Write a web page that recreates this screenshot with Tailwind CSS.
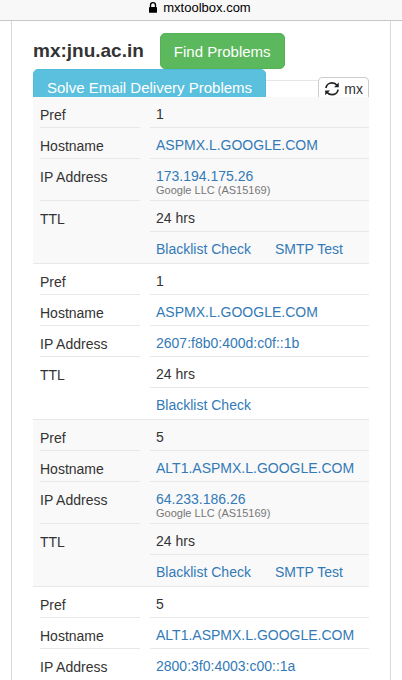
<!DOCTYPE html>
<html lang="en">
<head>
    <meta charset="UTF-8">
    <meta name="viewport" content="width=device-width, initial-scale=1.0">
    <title>mx:jnu.ac.in - mxtoolbox.com</title>
    <script src="https://cdn.jsdelivr.net/npm/@tailwindcss/browser@4"></script>
</head>
<body class="bg-white font-['Liberation_Sans',Arial,sans-serif] text-[15px] leading-5 text-[#333333]">
    <!-- Browser address bar -->
    <header class="flex h-[21px] items-start justify-center gap-1 border-b border-[#c6c6c6] bg-[#f8f8f8] pr-1 text-[13px] leading-4 text-black">
        <svg class="mt-0.5 h-3 w-3" viewBox="0 0 12 12" aria-hidden="true">
            <path d="M3.5 6V3.2a2.5 2.5 0 0 1 5 0V6" fill="none" stroke="#000" stroke-width="1.3"/>
            <rect x="2" y="5" width="8" height="5.8" rx="0.9"/>
        </svg>
        <span>mxtoolbox.com</span>
    </header>

    <main class="mx-[11px] min-h-[calc(100vh-21px)] border-x border-[#d8d8d8] px-[21px] pt-3">
        <div class="flex items-center gap-4">
            <h1 class="text-[19px] font-bold whitespace-nowrap">mx:jnu.ac.in</h1>
            <button type="button" class="h-9 rounded-[5px] border border-[#56b256] bg-[#5cb85c] px-[13px] pt-px whitespace-nowrap text-white">Find Problems</button>
        </div>

        <div class="flex h-7 items-start overflow-hidden">
            <button type="button" class="h-9 shrink-0 rounded-[5px] border border-[#50bbdb] bg-[#5bc0de] px-[13px] pt-px whitespace-nowrap text-white">Solve Email Delivery Problems</button>
            <span class="mt-[11px] flex-1 border-t border-[#e5e5e5]"></span>
            <button type="button" class="mt-2 flex h-7 shrink-0 items-start gap-1 rounded-[4px] border border-[#cccccc] bg-white px-[5px] pt-[3px] text-sm leading-4">
                <svg class="h-4 w-4" viewBox="0 0 16 16" aria-hidden="true">
                    <g fill="none" stroke="#222" stroke-width="1.7">
                        <path d="M1.9 7C2.4 4 5 1.9 8 1.9c2 0 3.9.9 5.1 2.5"/>
                        <path d="M14.1 8.6c-.5 3-3.1 5.1-6.1 5.1-2 0-3.9-.9-5.1-2.5"/>
                    </g>
                    <path d="M14.8 1.4v4.8H10zM1.2 14.2V9.4H6z" fill="#222"/>
                </svg>
                <span>mx</span>
            </button>
        </div>

        <table class="w-full table-fixed border-collapse text-left text-sm leading-5">
            <colgroup>
                <col class="w-[117px]">
                <col>
            </colgroup>
            <tbody class="border-b border-[#e8e8e8] bg-[#f9f9f9]">
                <tr>
                    <th scope="row" class="p-0 pr-2.5 pl-[7px] align-top font-normal"><div class="h-[31px] border-b border-[#e8e8e8] pt-2">Pref</div></th>
                    <td class="p-0 align-top"><div class="h-[31px] border-b border-[#e8e8e8] px-1.5 pt-[7px]">1</div></td>
                </tr>
                <tr>
                    <th scope="row" class="p-0 pr-2.5 pl-[7px] align-top font-normal"><div class="h-[31px] border-b border-[#e8e8e8] pt-2">Hostname</div></th>
                    <td class="p-0 align-top"><div class="h-[31px] border-b border-[#e8e8e8] px-1.5 pt-[7px]"><a href="#" class="text-[#337ab7]">ASPMX.L.GOOGLE.COM</a></div></td>
                </tr>
                <tr>
                    <th scope="row" class="p-0 pr-2.5 pl-[7px] align-top font-normal"><div class="h-[42px] border-b border-[#e8e8e8] pt-2">IP Address</div></th>
                    <td class="p-0 align-top"><div class="h-[42px] border-b border-[#e8e8e8] px-1.5 pt-[7px]"><a href="#" class="block text-[#337ab7]">173.194.175.26</a><small class="block text-[11px] leading-2 text-[#777777]">Google LLC (AS15169)</small></div></td>
                </tr>
                <tr>
                    <th scope="row" rowspan="2" class="p-0 pt-2 pl-[7px] align-top font-normal">TTL</th>
                    <td class="p-0 align-top"><div class="h-[31px] border-b border-[#e8e8e8] px-1.5 pt-[7px]">24 hrs</div></td>
                </tr>
                <tr>
                    <td class="p-0 align-top"><div class="flex h-[31px] gap-6 px-1.5 pt-[7px] text-[#337ab7]"><a href="#">Blacklist Check</a><a href="#">SMTP Test</a></div></td>
                </tr>
            </tbody>
            <tbody class="border-b border-[#e8e8e8]">
                <tr>
                    <th scope="row" class="p-0 pr-2.5 pl-[7px] align-top font-normal"><div class="h-[31px] border-b border-[#e8e8e8] pt-2">Pref</div></th>
                    <td class="p-0 align-top"><div class="h-[31px] border-b border-[#e8e8e8] px-1.5 pt-[7px]">1</div></td>
                </tr>
                <tr>
                    <th scope="row" class="p-0 pr-2.5 pl-[7px] align-top font-normal"><div class="h-[31px] border-b border-[#e8e8e8] pt-2">Hostname</div></th>
                    <td class="p-0 align-top"><div class="h-[31px] border-b border-[#e8e8e8] px-1.5 pt-[7px]"><a href="#" class="text-[#337ab7]">ASPMX.L.GOOGLE.COM</a></div></td>
                </tr>
                <tr>
                    <th scope="row" class="p-0 pr-2.5 pl-[7px] align-top font-normal"><div class="h-[31px] border-b border-[#e8e8e8] pt-2">IP Address</div></th>
                    <td class="p-0 align-top"><div class="h-[31px] border-b border-[#e8e8e8] px-1.5 pt-[7px]"><a href="#" class="text-[#337ab7]">2607:f8b0:400d:c0f::1b</a></div></td>
                </tr>
                <tr>
                    <th scope="row" rowspan="2" class="p-0 pt-2 pl-[7px] align-top font-normal">TTL</th>
                    <td class="p-0 align-top"><div class="h-[31px] border-b border-[#e8e8e8] px-1.5 pt-[7px]">24 hrs</div></td>
                </tr>
                <tr>
                    <td class="p-0 align-top"><div class="flex h-[31px] gap-6 px-1.5 pt-[7px] text-[#337ab7]"><a href="#">Blacklist Check</a></div></td>
                </tr>
            </tbody>
            <tbody class="border-b border-[#e8e8e8] bg-[#f9f9f9]">
                <tr>
                    <th scope="row" class="p-0 pr-2.5 pl-[7px] align-top font-normal"><div class="h-[31px] border-b border-[#e8e8e8] pt-2">Pref</div></th>
                    <td class="p-0 align-top"><div class="h-[31px] border-b border-[#e8e8e8] px-1.5 pt-[7px]">5</div></td>
                </tr>
                <tr>
                    <th scope="row" class="p-0 pr-2.5 pl-[7px] align-top font-normal"><div class="h-[31px] border-b border-[#e8e8e8] pt-2">Hostname</div></th>
                    <td class="p-0 align-top"><div class="h-[31px] border-b border-[#e8e8e8] px-1.5 pt-[7px]"><a href="#" class="text-[#337ab7]">ALT1.ASPMX.L.GOOGLE.COM</a></div></td>
                </tr>
                <tr>
                    <th scope="row" class="p-0 pr-2.5 pl-[7px] align-top font-normal"><div class="h-[42px] border-b border-[#e8e8e8] pt-2">IP Address</div></th>
                    <td class="p-0 align-top"><div class="h-[42px] border-b border-[#e8e8e8] px-1.5 pt-[7px]"><a href="#" class="block text-[#337ab7]">64.233.186.26</a><small class="block text-[11px] leading-2 text-[#777777]">Google LLC (AS15169)</small></div></td>
                </tr>
                <tr>
                    <th scope="row" rowspan="2" class="p-0 pt-2 pl-[7px] align-top font-normal">TTL</th>
                    <td class="p-0 align-top"><div class="h-[31px] border-b border-[#e8e8e8] px-1.5 pt-[7px]">24 hrs</div></td>
                </tr>
                <tr>
                    <td class="p-0 align-top"><div class="flex h-[31px] gap-6 px-1.5 pt-[7px] text-[#337ab7]"><a href="#">Blacklist Check</a><a href="#">SMTP Test</a></div></td>
                </tr>
            </tbody>
            <tbody>
                <tr>
                    <th scope="row" class="p-0 pr-2.5 pl-[7px] align-top font-normal"><div class="h-[31px] border-b border-[#e8e8e8] pt-2">Pref</div></th>
                    <td class="p-0 align-top"><div class="h-[31px] border-b border-[#e8e8e8] px-1.5 pt-[7px]">5</div></td>
                </tr>
                <tr>
                    <th scope="row" class="p-0 pr-2.5 pl-[7px] align-top font-normal"><div class="h-[31px] border-b border-[#e8e8e8] pt-2">Hostname</div></th>
                    <td class="p-0 align-top"><div class="h-[31px] border-b border-[#e8e8e8] px-1.5 pt-[7px]"><a href="#" class="text-[#337ab7]">ALT1.ASPMX.L.GOOGLE.COM</a></div></td>
                </tr>
                <tr>
                    <th scope="row" class="p-0 pl-[7px] align-top font-normal"><div class="h-[31px] pt-2">IP Address</div></th>
                    <td class="p-0 align-top"><div class="h-[31px] px-1.5 pt-[7px]"><a href="#" class="text-[#337ab7]">2800:3f0:4003:c00::1a</a></div></td>
                </tr>
            </tbody>
        </table>
    </main>
</body>
</html>
